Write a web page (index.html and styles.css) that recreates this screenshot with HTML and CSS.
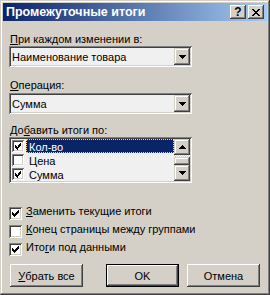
FILE: index.html
```html
<!DOCTYPE html>
<html lang="ru">
<head>
<meta charset="utf-8">
<link rel="stylesheet" href="styles.css">
</head>
<body>
<div class="window">
  <div class="titlebar">
    <span class="title">Промежуточные итоги</span>
    <div class="caption-btns">
      <span class="cap-btn help">?</span>
      <span class="cap-btn close">
        <svg width="8" height="7" viewBox="0 0 8 7" shape-rendering="crispEdges"><path d="M0 0h2v1H0z M6 0h2v1H6z M1 1h2v1H1z M5 1h2v1H5z M2 2h4v1H2z M3 3h2v1H3z M2 4h4v1H2z M1 5h2v1H1z M5 5h2v1H5z M0 6h2v1H0z M6 6h2v1H6z" fill="#000"/></svg>
      </span>
    </div>
  </div>
  <div class="content">
    <div class="label"><u>П</u>ри каждом изменении в:</div>
    <div class="combo">
      <span class="combo-text">Наименование товара</span>
      <span class="sb-btn"><svg width="7" height="4" viewBox="0 0 7 4" shape-rendering="crispEdges"><path d="M0 0h7v1H0z M1 1h5v1H1z M2 2h3v1H2z M3 3h1v1H3z" fill="#000"/></svg></span>
    </div>
    <div class="label label-op"><u>О</u>перация:</div>
    <div class="combo">
      <span class="combo-text">Сумма</span>
      <span class="sb-btn"><svg width="7" height="4" viewBox="0 0 7 4" shape-rendering="crispEdges"><path d="M0 0h7v1H0z M1 1h5v1H1z M2 2h3v1H2z M3 3h1v1H3z" fill="#000"/></svg></span>
    </div>
    <div class="label label-add">До<u>б</u>авить итоги по:</div>
    <div class="listbox">
      <div class="items">
        <div class="item">
          <span class="chk"><svg width="9" height="9" viewBox="0 0 9 9" shape-rendering="crispEdges"><path d="M1 3h1v3H1z M2 4h1v3H2z M3 5h1v3H3z M4 4h1v3H4z M5 3h1v3H5z M6 2h1v3H6z M7 1h1v3H7z" fill="#000"/></svg></span>
          <span class="item-text selected">Кол-во</span>
        </div>
        <div class="item">
          <span class="chk"></span>
          <span class="item-text">Цена</span>
        </div>
        <div class="item">
          <span class="chk"><svg width="9" height="9" viewBox="0 0 9 9" shape-rendering="crispEdges"><path d="M1 3h1v3H1z M2 4h1v3H2z M3 5h1v3H3z M4 4h1v3H4z M5 3h1v3H5z M6 2h1v3H6z M7 1h1v3H7z" fill="#000"/></svg></span>
          <span class="item-text">Сумма</span>
        </div>
      </div>
      <div class="vscroll">
        <span class="sb-btn"><svg width="7" height="4" viewBox="0 0 7 4" shape-rendering="crispEdges"><path d="M3 0h1v1H3z M2 1h3v1H2z M1 2h5v1H1z M0 3h7v1H0z" fill="#000"/></svg></span>
        <div class="track"><span class="thumb"></span></div>
        <span class="sb-btn"><svg width="7" height="4" viewBox="0 0 7 4" shape-rendering="crispEdges"><path d="M0 0h7v1H0z M1 1h5v1H1z M2 2h3v1H2z M3 3h1v1H3z" fill="#000"/></svg></span>
      </div>
    </div>
    <div class="checks">
      <div class="check-row">
        <span class="chk"><svg width="9" height="9" viewBox="0 0 9 9" shape-rendering="crispEdges"><path d="M1 3h1v3H1z M2 4h1v3H2z M3 5h1v3H3z M4 4h1v3H4z M5 3h1v3H5z M6 2h1v3H6z M7 1h1v3H7z" fill="#000"/></svg></span>
        <span class="check-text"><u>З</u>аменить текущие итоги</span>
      </div>
      <div class="check-row">
        <span class="chk"></span>
        <span class="check-text"><u>К</u>онец страницы между группами</span>
      </div>
      <div class="check-row">
        <span class="chk"><svg width="9" height="9" viewBox="0 0 9 9" shape-rendering="crispEdges"><path d="M1 3h1v3H1z M2 4h1v3H2z M3 5h1v3H3z M4 4h1v3H4z M5 3h1v3H5z M6 2h1v3H6z M7 1h1v3H7z" fill="#000"/></svg></span>
        <span class="check-text">Ито<u>г</u>и под данными</span>
      </div>
    </div>
    <div class="buttons">
      <span class="btn"><u>У</u>брать все</span>
      <div class="btn-group">
        <span class="btn default">OK</span>
        <span class="btn">Отмена</span>
      </div>
    </div>
  </div>
</div>
</body>
</html>
```

FILE: styles.css
```css
html, body {
  margin: 0;
  padding: 0;
  background: #d4d0c8;
}

.window {
  width: 270px;
  height: 295px;
  box-sizing: border-box;
  padding: 3px;
  background: #d4d0c8;
  box-shadow: inset -1px -1px #404040, inset 1px 1px #d4d0c8, inset -2px -2px #808080, inset 2px 2px #fff;
  font: 11px "Liberation Sans", Arial, sans-serif;
  color: #000;
  display: flex;
  flex-direction: column;
}

.titlebar {
  height: 18px;
  flex: none;
  display: flex;
  align-items: center;
  justify-content: space-between;
  padding: 0 3px 0 3px;
  background: linear-gradient(to right, #0a246a, #a6caf0);
}

.title {
  color: #fff;
  font-weight: bold;
  font-size: 12.5px;
  white-space: nowrap;
}

.caption-btns {
  display: flex;
  gap: 2px;
}

.cap-btn {
  width: 16px;
  height: 14px;
  box-sizing: border-box;
  background: #d4d0c8;
  box-shadow: inset -1px -1px #404040, inset 1px 1px #fff, inset -2px -2px #808080;
  display: flex;
  align-items: center;
  justify-content: center;
}

.cap-btn.help {
  font-weight: bold;
  font-size: 12px;
  line-height: 14px;
}

.content {
  flex: 1;
  display: flex;
  flex-direction: column;
  padding: 12px 7px 0 6px;
}

.label {
  line-height: 13px;
  padding-left: 1px;
  white-space: nowrap;
}

.label-op {
  margin-top: 12px;
  margin-bottom: 1px;
}

.label-add {
  margin-top: 10px;
}

.combo {
  width: 183px;
  height: 21px;
  box-sizing: border-box;
  padding: 2px;
  background: #f0f0f0;
  box-shadow: inset 1px 1px #808080, inset -1px -1px #fff, inset 2px 2px #404040, inset -2px -2px #d4d0c8;
  display: flex;
}

.combo-text {
  flex: 1;
  line-height: 17px;
  padding: 1px 0 0 1px;
  white-space: nowrap;
}

.sb-btn {
  width: 16px;
  box-sizing: border-box;
  background: #d4d0c8;
  box-shadow: inset -1px -1px #404040, inset 1px 1px #d4d0c8, inset -2px -2px #808080, inset 2px 2px #fff;
  display: flex;
  align-items: center;
  justify-content: center;
}

.vscroll .sb-btn {
  height: 16px;
}

.listbox {
  width: 183px;
  height: 46px;
  box-sizing: border-box;
  padding: 2px;
  background: #f0f0f0;
  box-shadow: inset 1px 1px #808080, inset -1px -1px #fff, inset 2px 2px #404040, inset -2px -2px #d4d0c8;
  display: flex;
}

.items {
  flex: 1;
  display: flex;
  flex-direction: column;
}

.item {
  height: 14px;
  display: flex;
  align-items: center;
  padding-left: 1px;
}

.chk {
  width: 13px;
  height: 13px;
  flex: none;
  box-sizing: border-box;
  padding: 2px;
  background: #fff;
  box-shadow: inset 1px 1px #808080, inset -1px -1px #fff, inset 2px 2px #404040, inset -2px -2px #d4d0c8;
  display: flex;
}

.item .chk {
  width: 12px;
  height: 12px;
}

.item-text {
  flex: 1;
  margin-left: 2px;
  height: 14px;
  box-sizing: border-box;
  line-height: 12px;
  padding: 1px 0 0 2px;
  border: 1px solid transparent;
}

.item-text.selected {
  background: #0a246a;
  color: #fff;
  border: 1px dotted #f2d48a;
}

.vscroll {
  width: 16px;
  display: flex;
  flex-direction: column;
}

.track {
  flex: 1;
  display: flex;
  flex-direction: column;
  justify-content: flex-end;
  background: repeating-conic-gradient(#fff 0 25%, #d4d0c8 0 50%) 0 0 / 2px 2px;
}

.thumb {
  height: 8px;
  background: #d4d0c8;
  box-shadow: inset -1px -1px #404040, inset 1px 1px #d4d0c8, inset -2px -2px #808080, inset 2px 2px #fff;
}

.checks {
  margin-top: 24px;
  display: flex;
  flex-direction: column;
  gap: 5px;
}

.check-row {
  display: flex;
  align-items: flex-start;
  height: 13px;
}

.check-text {
  margin-left: 4px;
  margin-top: -2px;
  line-height: 13px;
  white-space: nowrap;
}

.buttons {
  margin-top: 8px;
  display: flex;
  justify-content: space-between;
  padding-left: 1px;
}

.btn-group {
  display: flex;
  gap: 8px;
}

.btn {
  width: 73px;
  height: 23px;
  box-sizing: border-box;
  background: #d4d0c8;
  box-shadow: inset -1px -1px #404040, inset 1px 1px #fff, inset -2px -2px #808080;
  display: flex;
  align-items: center;
  justify-content: center;
  white-space: nowrap;
}

.btn.default {
  border: 1px solid #000;
}
```
